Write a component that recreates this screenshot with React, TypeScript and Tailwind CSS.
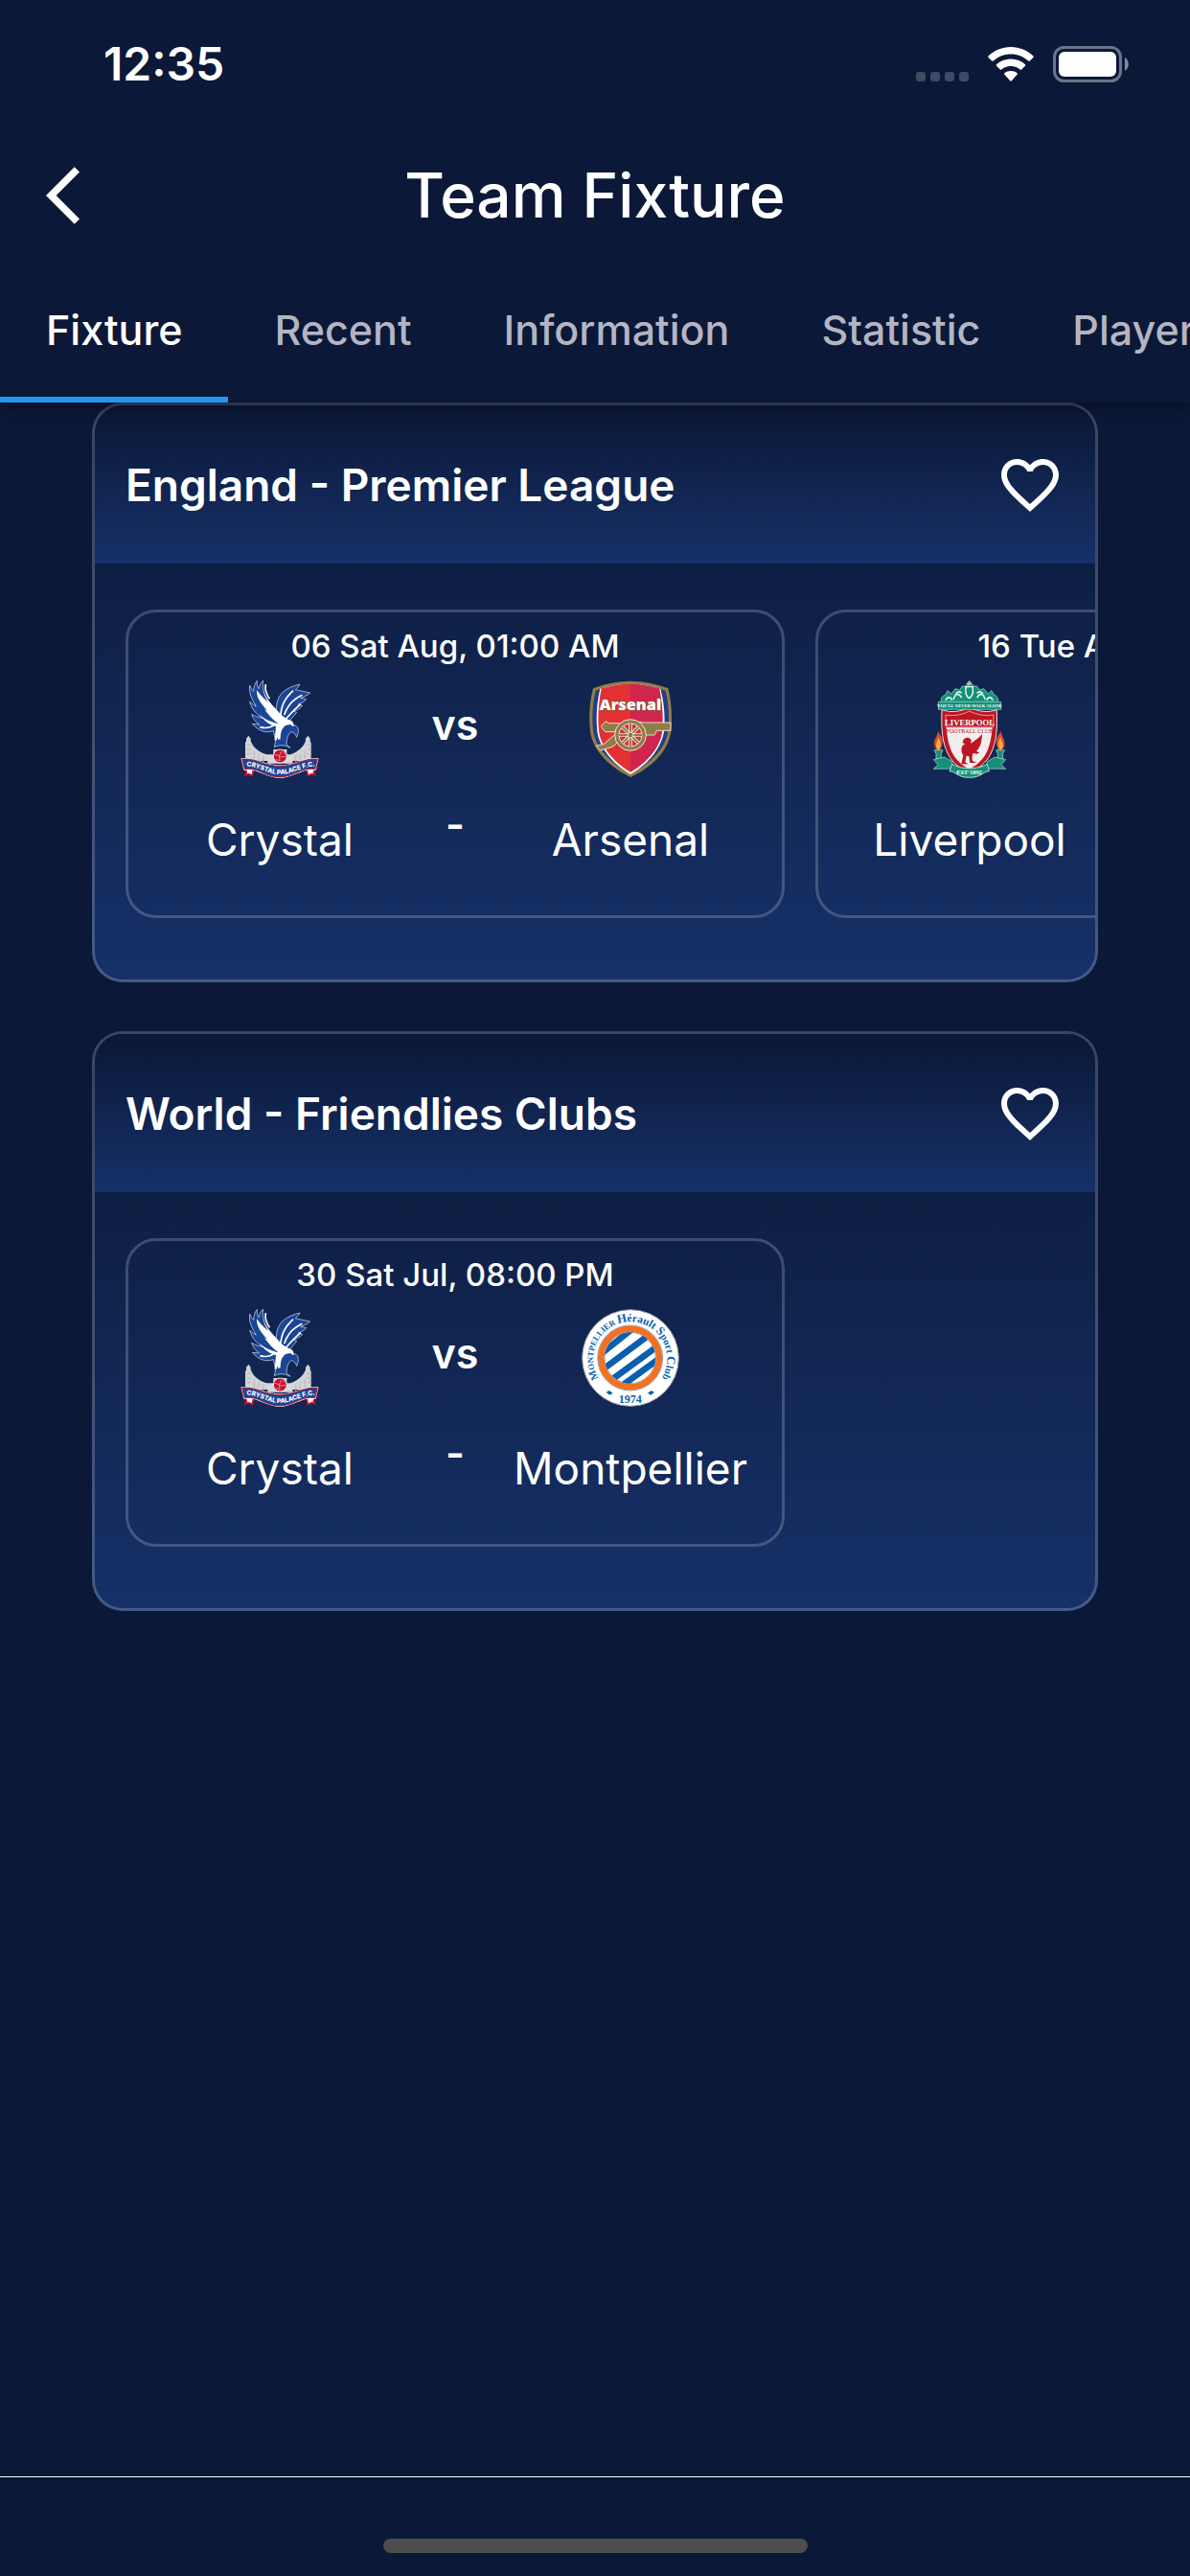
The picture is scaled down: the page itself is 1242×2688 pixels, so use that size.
import { MdArrowBackIos, MdFavoriteBorder } from "react-icons/md"

const tabs = ["Fixture", "Recent", "Information", "Statistic", "Players"]

const leagues = [
    {
        name: "England - Premier League",
        matches: [
            { date: "06 Sat Aug, 01:00 AM", home: "Crystal", away: "Arsenal" },
            { date: "16 Tue Aug, 02:00 AM", home: "Liverpool", away: "Crystal" },
        ],
    },
    {
        name: "World - Friendlies Clubs",
        matches: [{ date: "30 Sat Jul, 08:00 PM", home: "Crystal", away: "Montpellier" }],
    },
]

const CrystalCrest = () => {
    return (
        <svg viewBox="3 30 306 306" className="size-[102px]" aria-hidden="true">
            {/* towers and wall */}
            <path d="M48 282V226l3-6v-8l7-9 7 9v8l4 8c6 12 22 27 46 34h74c24-8 38-23 44-34l4-8v-8l7-9 7 9v8l3 6v56z" fill="#d3d4d6" />
            <path d="M52 232h14M52 246h14M52 260h14M242 232h14M242 246h14M242 260h14M76 250v30M90 260v24M104 266v24M206 266v24M220 260v24M234 250v30" stroke="#a5a9b0" strokeWidth="2" />
            {/* wings */}
            <g stroke="#dfe6f2" strokeWidth="2" strokeLinejoin="round">
                <path d="M140 168c10-40-4-70 24-100 14-14 38-22 55-26-4 8-8 12-14 17 15 4 30 6 46 10-10 9-20 13-30 16l18 4c-8 9-16 13-26 16l14 4c-8 10-18 14-28 17l10 4c-6 10-14 16-22 26l-10 22z" fill="#1b4596" />
                <path d="M136 188c-24 8-44 2-66-22l22 2c-12-8-20-18-24-32 14 8 24 10 34 12-18-12-34-26-40-52 8 8 14 12 20 15-12-20-24-40-20-66 3 8 7 14 12 19 0-12 3-23 11-33-1 10 1 18 5 25 2-10 7-19 14-26-2 14-1 26 3 38 8 26 30 44 58 76 12 14 24 24 42 28 10 8 8 22 2 36-3-10-9-16-18-17-12 12-13 22-14 40l12 10c-18-10-36-10-50-2l4-20z" fill="#1b4596" />
            </g>
            <path d="M84 60c-2 24 14 44 34 66l-10-6c14 20 26 32 44 46-26-6-44-14-60-30 14 20 30 34 52 38l-4 44 18-4c0-20 4-36 18-44l14-2 8 8c4-8 0-16-6-20-20-6-36-20-50-38-18-20-34-36-38-62 2 18 8 30 16 42-18-14-28-26-36-38z" fill="#fff" />
            <path d="M112 42c-4 18 4 34 12 46M158 140c4-30 10-50 40-78M170 138c8-24 20-44 56-62M176 150c16-18 26-30 46-46M94 176c20 6 34 2 48-10" stroke="#fff" strokeWidth="5" fill="none" />
            <path d="M184 172l16 4M148 210l2 20M160 206l2 22" stroke="#1b4596" strokeWidth="3" />
            {/* ball */}
            <path d="M118 264h18v-18h42v18h18v26h-78z" fill="#d8d9db" />
            <circle cx="157" cy="267" r="21" fill="#c8102e" stroke="#e9e9ea" strokeWidth="3" />
            <path d="M140 262l14 4 8-14M154 266l2 16M156 270l18-2M166 254l8 8M144 276l10 6" stroke="#f3c5cc" strokeWidth="2" fill="none" />
            {/* ribbon */}
            <path d="M42 304l32 4-4 20-12-5-10 3 4-10zM272 304l-32 4 4 20 12-5 10 3-4-10z" fill="#fff" stroke="#c8102e" strokeWidth="5" />
            <path d="M38 277c42-6 70 22 119 21 48 0 78-27 117-21l-8 31c-40-8-66 24-110 25-44 0-70-33-110-25z" fill="#1b4596" stroke="#fff" strokeWidth="6" />
            <path d="M38 277c42-6 70 22 119 21 48 0 78-27 117-21l-8 31c-40-8-66 24-110 25-44 0-70-33-110-25z" fill="#1b4596" stroke="#c8102e" strokeWidth="3" />
            <path id="palace-ribbon" d="M50 299c42 0 66 25 106 25 40 0 68-25 112-25" fill="none" />
            <text className="font-[Inter] font-extrabold" fontSize="20" fill="#fff" textAnchor="middle">
                <textPath href="#palace-ribbon" startOffset="50%">CRYSTAL PALACE F.C.</textPath>
            </text>
        </svg>
    )
}

const ArsenalCrest = () => {
    return (
        <svg viewBox="17 30 306 306" className="size-[102px]" aria-hidden="true">
            <path d="M53 55Q110 32 170 32Q230 32 288 55C298 95 302 145 297 190C288 255 232 305 170 333C110 305 54 255 44 190C39 145 42 95 53 55Z" fill="#8f7d49" />
            <path d="M61 62Q115 41 170 41Q226 41 280 62C290 100 292 145 288 188C280 245 228 293 170 321C113 293 62 245 53 188C49 145 51 100 61 62Z" fill="#213f85" />
            <path d="M75 56Q122 41 170 41Q219 41 264 56C276 102 280 150 274 196C262 252 218 297 170 324C123 297 78 252 67 196C61 150 64 102 75 56Z" fill="#fff" />
            <path d="M79 55Q124 41 170 41V317C127 292 83 250 72 195C66 150 70 102 79 55Z" fill="#e23033" />
            <path d="M261 55Q216 41 170 41V317C214 292 258 250 269 195C274 150 270 102 261 55Z" fill="#d0254c" />
            {/* cannon */}
            <path d="M92 158q-4 6-12 12-4 6 3 12l8 9h40l-44 38-25 6 14 14 40-12 20-20h50l32-16h28l6-14h44v-25h-80l-40-4-40 6h-34z" fill="#8f7d49" stroke="#e9d9cf" strokeWidth="3" />
            <circle cx="170" cy="201" r="49" fill="#8f7d49" stroke="#efe6d4" strokeWidth="3" />
            <circle cx="170" cy="201" r="36" fill="#d92b40" stroke="#efe6d4" strokeWidth="3" />
            <path d="M170 165v72M134 201h72M145 176l50 50M195 176l-50 50" stroke="#efe6d4" strokeWidth="11" />
            <path d="M170 165v72M134 201h72M145 176l50 50M195 176l-50 50" stroke="#8f7d49" strokeWidth="6" />
            <circle cx="170" cy="201" r="9" fill="#8f7d49" stroke="#efe6d4" strokeWidth="3" />
            <text x="170" y="123" className="font-['Open_Sans'] font-extrabold" fontSize="49" fill="#fff" stroke="#8f5a35" strokeWidth="4" paintOrder="stroke" textAnchor="middle">Arsenal</text>
        </svg>
    )
}

const Torch = () => {
    return (
        <g>
            <path d="M56 188c8 14 16 22 14 38-1 14-5 20-12 24-9-4-14-12-14-22 0-16 10-22 12-40z" fill="#e2452d" />
            <path d="M57 206c4 12 9 16 7 28-1 8-4 12-7 13-5-3-8-8-7-16 1-9 6-14 7-25z" fill="#fbb03b" />
            <path d="M45 248h26l-5 12v16H50v-16z" fill="#149077" stroke="#bfe5da" strokeWidth="2" />
        </g>
    )
}

const LiverpoolCrest = () => {
    return (
        <svg viewBox="2 30 306 306" className="size-[102px]" aria-hidden="true">
            <path d="M66 100c-2-16 4-22 12-24l8-14 12 10 12-16 14 4 8-12 10 0 13-16 13 16 10 0 8 12 14-4 12 16 12-10 8 14c8 2 14 8 12 24z" fill="#149077" stroke="#b5ded3" strokeWidth="2" />
            <path d="M80 92q10-18 20 0M104 90q10-30 26-6M178 84q16-24 26 6M208 92q10-18 20 0M112 72q10-12 18-2M178 70q10-10 18 2" stroke="#dff3ed" strokeWidth="5" fill="none" />
            <path d="M143 50h22v20q-4 12-11 16-8-4-11-16z" fill="#149077" stroke="#fff" strokeWidth="4" />
            <path d="M153 32v18M145 40h16" stroke="#8ed0c0" strokeWidth="5" />
            <Torch />
            <g transform="matrix(-1 0 0 1 309 0)">
                <Torch />
            </g>
            {/* ribbons at the foot */}
            <path d="M42 278l34-8 24 14 4 22-62 1 14-13zM268 278l-34-8-24 14-4 22 62 1-14-13z" fill="#149077" stroke="#b5ded3" strokeWidth="2" />
            <path d="M68 122c30 10 60 6 86-8 28 14 58 18 86 8 2 60 0 100-20 140-12 24-36 44-66 58-30-14-54-34-66-58-20-40-22-80-20-140z" fill="#bd1622" stroke="#e8e4e4" strokeWidth="3" />
            <path d="M82 178h144c-3 36-10 66-24 88-12 18-28 32-48 42-20-10-36-24-48-42-14-22-21-52-24-88z" fill="#f3eeee" />
            <path d="M80 138c28 4 52 0 74-12 24 12 48 16 76 12l-1 38H81z" fill="#bd1622" stroke="#f0dada" strokeWidth="2" />
            <text x="155" y="170" className="font-['Liberation_Serif'] font-bold" fontSize="26" fill="#fff" textAnchor="middle">LIVERPOOL</text>
            <text x="155" y="194" className="font-['Liberation_Serif']" fontSize="18" fill="#bd1622" textAnchor="middle">FOOTBALL CLUB</text>
            {/* liver bird */}
            <path d="M134 222c0-8 8-14 18-12 8 2 10 10 6 18 14-10 26-18 36-30-1 22-4 40-18 54l10 4-8 4-12-2c-4 8-4 18-2 24l14 6h-22l-3-20-8-2-4 20 10 6h-22l6-28c-6-8-8-20-2-30l8-6-8-2z" fill="#bd1622" />
            <path d="M100 292c32 18 78 18 110 0l6 22c-22 2-24 20-62 20s-40-18-62-20z" fill="#149077" stroke="#b5ded3" strokeWidth="3" />
            <text x="154" y="325" className="font-['Liberation_Serif'] font-bold" fontSize="19" fill="#fff" textAnchor="middle">EST·1892</text>
            <path d="M57 97h196v24H57z" fill="#149077" stroke="#b5ded3" strokeWidth="2" />
            <text x="155" y="115" className="font-['Liberation_Serif'] font-bold" fontSize="14" fill="#fff" textAnchor="middle">YOU'LL NEVER WALK ALONE</text>
        </svg>
    )
}

const MontpellierCrest = () => {
    return (
        <svg viewBox="20 33 306 306" className="size-[102px]" aria-hidden="true">
            <defs>
                <clipPath id="mhsc-disc">
                    <circle cx="172" cy="186" r="80" />
                </clipPath>
            </defs>
            <circle cx="173" cy="186" r="151" fill="#fff" stroke="#8f9399" strokeWidth="3" />
            <circle cx="172" cy="186" r="91" fill="#fff" stroke="#f37021" strokeWidth="20" />
            <circle cx="172" cy="186" r="102" fill="none" stroke="#9aa0a8" strokeWidth="3" />
            <circle cx="172" cy="186" r="80" fill="#fff" stroke="#9aa0a8" strokeWidth="3" />
            <path d="M80 174L184 91M81 226L239 108M97 267L257 150M138 279L262 189" stroke="#0b5fae" strokeWidth="20" clipPath="url(#mhsc-disc)" />
            <path id="mhsc-ring" d="M86 266A116 116 0 1 1 258 266" fill="none" />
            <text className="font-['Liberation_Serif'] font-bold" fill="#0b5fae" textAnchor="middle">
                <textPath href="#mhsc-ring" startOffset="50%">
                    <tspan fontSize="32">M</tspan>
                    <tspan fontSize="26">ONTPELLIER </tspan>
                    <tspan fontSize="38">H</tspan>
                    <tspan fontSize="34">érault </tspan>
                    <tspan fontSize="38">S</tspan>
                    <tspan fontSize="32">port </tspan>
                    <tspan fontSize="38">C</tspan>
                    <tspan fontSize="32">lub</tspan>
                </textPath>
            </text>
            <text x="172" y="327" className="font-['Liberation_Serif'] font-bold" fontSize="36" fill="#0b5fae" textAnchor="middle">1974</text>
            <path d="M97 293l10-5 11 8-10 6zM227 296l11-8 10 5-11 9z" fill="#0b5fae" />
        </svg>
    )
}

const crests: Record<string, () => React.JSX.Element> = {
    Crystal: CrystalCrest,
    Arsenal: ArsenalCrest,
    Liverpool: LiverpoolCrest,
    Montpellier: MontpellierCrest,
}

const StatusBar = () => {
    return (
        <div className="flex h-[134px] items-center justify-between pl-[108px] pr-16">
            <span className="text-[48px] leading-[56px] font-semibold">12:35</span>
            <div className="flex items-center gap-5">
                <svg viewBox="0 0 55 36" className="h-9 w-[55px]" fill="#fff" fillOpacity="0.22" aria-hidden="true">
                    <rect x="0" y="26" width="10" height="10" rx="3" />
                    <rect x="15" y="26" width="10" height="10" rx="3" />
                    <rect x="30" y="26" width="10" height="10" rx="3" />
                    <rect x="45" y="26" width="10" height="10" rx="3" />
                </svg>
                <svg viewBox="0 0 48 36" className="h-9 w-12" fill="#fff" aria-hidden="true">
                    <path d="M24 0C33 0 41 3.500 47.500 9.500Q48 10.200 47.500 11L43.800 14.600Q43 15.200 42.200 14.600C37 10 31 7.500 24 7.500S11 10 5.800 14.600Q5 15.200 4.200 14.600L.5 11Q0 10.200.5 9.500C7 3.500 15 0 24 0Z" />
                    <path d="M24 12.500C30 12.500 35 14.700 39 18.300Q39.600 19 39 19.800L35.200 23.600Q34.500 24.200 33.700 23.600C31 21.300 28 20 24 20S17 21.300 14.300 23.600Q13.500 24.200 12.800 23.600L9 19.800Q8.400 19 9 18.300C13 14.700 18 12.500 24 12.500Z" />
                    <path d="M24 25C26.700 25 28.800 25.800 30.600 27.200Q31.200 28 30.600 28.700L24.800 35.300Q24 36 23.200 35.300L17.400 28.700Q16.800 28 17.400 27.200C19.200 25.800 21.300 25 24 25Z" />
                </svg>
                <svg viewBox="0 0 79 38" className="h-[38px] w-[79px]" aria-hidden="true">
                    <rect x="1.500" y="1.500" width="69" height="35" rx="10" fill="none" stroke="#fff" strokeOpacity="0.4" strokeWidth="3" />
                    <rect x="6" y="6" width="60" height="26" rx="6" fill="#fff" />
                    <path d="M75 12c5 3 5 11 0 14z" fill="#fff" fillOpacity="0.5" />
                </svg>
            </div>
        </div>
    )
}

const Team = ({ name }: { name: string }) => {
    const Crest = crests[name]
    return (
        <div className="flex w-[260px] flex-col items-center">
            <Crest />
            <div className="mt-8 text-[46px] leading-[64px]">{name}</div>
        </div>
    )
}

const MatchCard = ({ match }: { match: (typeof leagues)[0]["matches"][0] }) => {
    return (
        <div className="h-[322px] w-[688px] shrink-0 rounded-[32px] border-3 border-white/20 pt-4">
            <div className="text-center text-[33px] leading-[39px] font-medium">{match.date}</div>
            <div className="mt-4 flex justify-center">
                <Team name={match.home} />
                <div className="flex w-[106px] flex-col items-center">
                    <div className="mt-4 text-[43px] leading-[60px] font-semibold">vs</div>
                    <div className="mt-11 text-[43px] leading-[60px] font-semibold">-</div>
                </div>
                <Team name={match.away} />
            </div>
        </div>
    )
}

const LeagueCard = ({ league }: { league: (typeof leagues)[0] }) => {
    return (
        <section className="overflow-hidden rounded-[32px] border-3 border-white/20 bg-linear-to-b from-[#0b1836] to-[#163169] bg-origin-border">
            <div className="flex h-[165px] items-center justify-between bg-linear-to-b from-[#0b1836] to-[#163169] px-8">
                <h2 className="text-[46px] leading-[60px] font-semibold">{league.name}</h2>
                <button aria-label="Add to favourites">
                    <MdFavoriteBorder className="size-[72px]" />
                </button>
            </div>
            <div className="flex gap-8 overflow-hidden px-8 pt-12 pb-16">
                {league.matches.map((match, index) => (
                    <MatchCard match={match} key={index} />
                ))}
            </div>
        </section>
    )
}

export default function App() {
    return (
        <div className="flex min-h-screen flex-col bg-[#0b1837] font-[Inter,sans-serif] text-white">
            <header className="relative z-10 shadow-[0_6px_16px_rgba(0,0,0,0.35)]">
                <StatusBar />
                <div className="grid h-[140px] grid-cols-[1fr_auto_1fr] items-center px-12">
                    <button aria-label="Back" className="justify-self-start">
                        <MdArrowBackIos className="size-[72px]" />
                    </button>
                    <h1 className="text-[64px] leading-[72px] font-medium">Team Fixture</h1>
                </div>
                <nav className="flex h-[146px] overflow-hidden">
                    {tabs.map((tab, index) => (
                        <button
                            key={index}
                            className={
                                index === 0
                                    ? "shrink-0 border-b-6 border-[#2196f3] px-12 text-[43px] font-medium"
                                    : "shrink-0 border-b-6 border-transparent px-12 text-[43px] font-medium text-[#b4b5c3]"
                            }
                        >
                            {tab}
                        </button>
                    ))}
                </nav>
            </header>
            <main className="flex grow flex-col gap-[51px] px-24">
                {leagues.map((league, index) => (
                    <LeagueCard league={league} key={index} />
                ))}
            </main>
            <footer className="flex h-[104px] items-end justify-center border-t border-white pb-6">
                <div className="h-[15px] w-[443px] rounded-full bg-[#4d4d4d]" />
            </footer>
        </div>
    )
}
